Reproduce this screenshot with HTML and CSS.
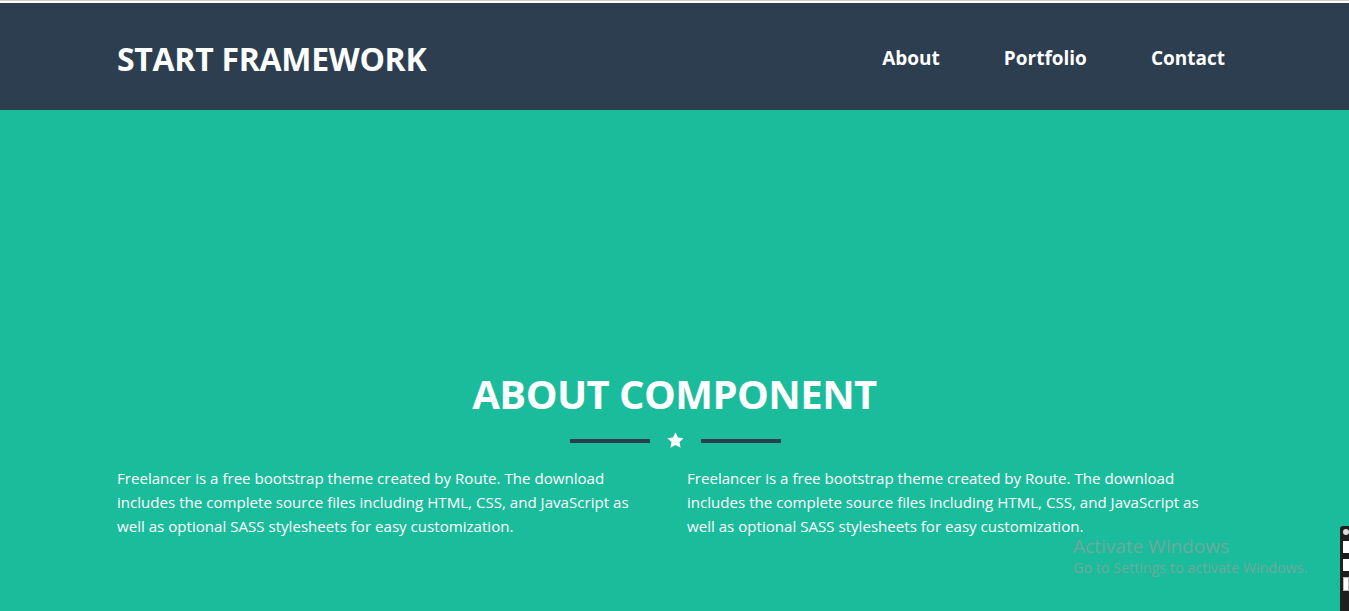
FILE: index.html
```html
<!DOCTYPE html>
<html lang="en">
<head>
<meta charset="utf-8">
<title>Start Framework</title>
<link rel="stylesheet" href="styles.css">
</head>
<body>
<header class="navbar">
  <div class="container nav-inner">
    <a class="brand" href="#">START FRAMEWORK</a>
    <nav class="nav-links">
      <a href="#">About</a>
      <a href="#">Portfolio</a>
      <a href="#">Contact</a>
    </nav>
  </div>
</header>
<section class="about">
  <div class="container">
    <h2 class="about-title">ABOUT COMPONENT</h2>
    <div class="divider">
      <span class="divider-line"></span>
      <svg class="divider-star" viewBox="0 0 24 24" width="19" height="19"><path d="M12 1.5l3.1 6.6 7.2.9-5.3 5 1.4 7.1L12 17.6l-6.4 3.5L7 14l-5.3-5 7.2-.9z" fill="#fff"/></svg>
      <span class="divider-line"></span>
    </div>
    <div class="about-cols">
      <p>Freelancer is a free bootstrap theme created by Route. The download includes the complete source files including HTML, CSS, and JavaScript as well as optional SASS stylesheets for easy customization.</p>
      <p>Freelancer is a free bootstrap theme created by Route. The download includes the complete source files including HTML, CSS, and JavaScript as well as optional SASS stylesheets for easy customization.</p>
    </div>
  </div>
</section>
<div class="watermark">
  <div class="wm-title">Activate Windows</div>
  <div class="wm-sub">Go to Settings to activate Windows.</div>
</div>
<div class="tray">
  <span class="tray-icon"></span>
  <span class="tray-bar"></span>
  <span class="tray-bar"></span>
  <span class="tray-box"></span>
</div>
</body>
</html>
```
FILE: styles.css
```css
* { box-sizing: border-box; }
html, body { margin: 0; padding: 0; }
body {
  font-family: "Open Sans", "Noto Sans", sans-serif;
  background: #1abc9c;
  color: #fff;
  border-top: 1px solid #cfcfcf;
  height: 611px;
  overflow: hidden;
  position: relative;
}
.container {
  width: 1115px;
  margin: 0 auto;
}
.navbar {
  background: #2c3e50;
  border-top: 2px solid #ffffff;
  height: 109px;
}
.nav-inner {
  height: 100%;
  display: flex;
  align-items: center;
  justify-content: space-between;
  padding-top: 3px;
}
.brand {
  color: #fff;
  text-decoration: none;
  font-weight: 700;
  font-size: 32px;
  letter-spacing: -0.3px;
}
.nav-links {
  display: flex;
  gap: 64px;
  padding-right: 7px;
}
.nav-links a {
  color: #fff;
  text-decoration: none;
  font-weight: 700;
  font-size: 19px;
}
.about {
  padding-top: 256px;
}
.about-title {
  margin: 0;
  text-align: center;
  font-size: 40px;
  font-weight: 700;
  line-height: 56px;
  letter-spacing: -0.55px;
}
.divider {
  display: flex;
  align-items: center;
  justify-content: center;
  gap: 16px;
  margin-top: 9px;
  padding-left: 1px;
}
.divider-line {
  width: 80px;
  height: 4px;
  background: #2c3e50;
}
.divider-star { display: block; }
.about-cols {
  display: grid;
  grid-template-columns: 1fr 1fr;
  gap: 25px;
  margin-top: 16px;
}
.about-cols p {
  margin: 0;
  font-size: 15.1px;
  line-height: 24px;
  max-width: 530px;
}
.watermark {
  position: absolute;
  left: 1073px;
  top: 533px;
  color: #6fa89c;
  font-family: "Open Sans", "Noto Sans", sans-serif;
}
.wm-title { font-size: 19px; line-height: 24px; }
.wm-sub { font-size: 14.3px; line-height: 20px; margin-top: 0; }
.tray {
  position: absolute;
  left: 1340px;
  top: 525px;
  width: 9px;
  height: 86px;
  background: #1f1f1f;
  border-top-left-radius: 3px;
  display: flex;
  flex-direction: column;
  align-items: flex-end;
  padding-top: 3px;
  gap: 6px;
}
.tray-icon { width: 6px; height: 6px; border-radius: 50%; background: #ddd; }
.tray-bar { width: 6px; height: 12px; background: #fff; }
.tray-box { width: 6px; height: 14px; border: 1px solid #bbb; background: #fff; }
```
